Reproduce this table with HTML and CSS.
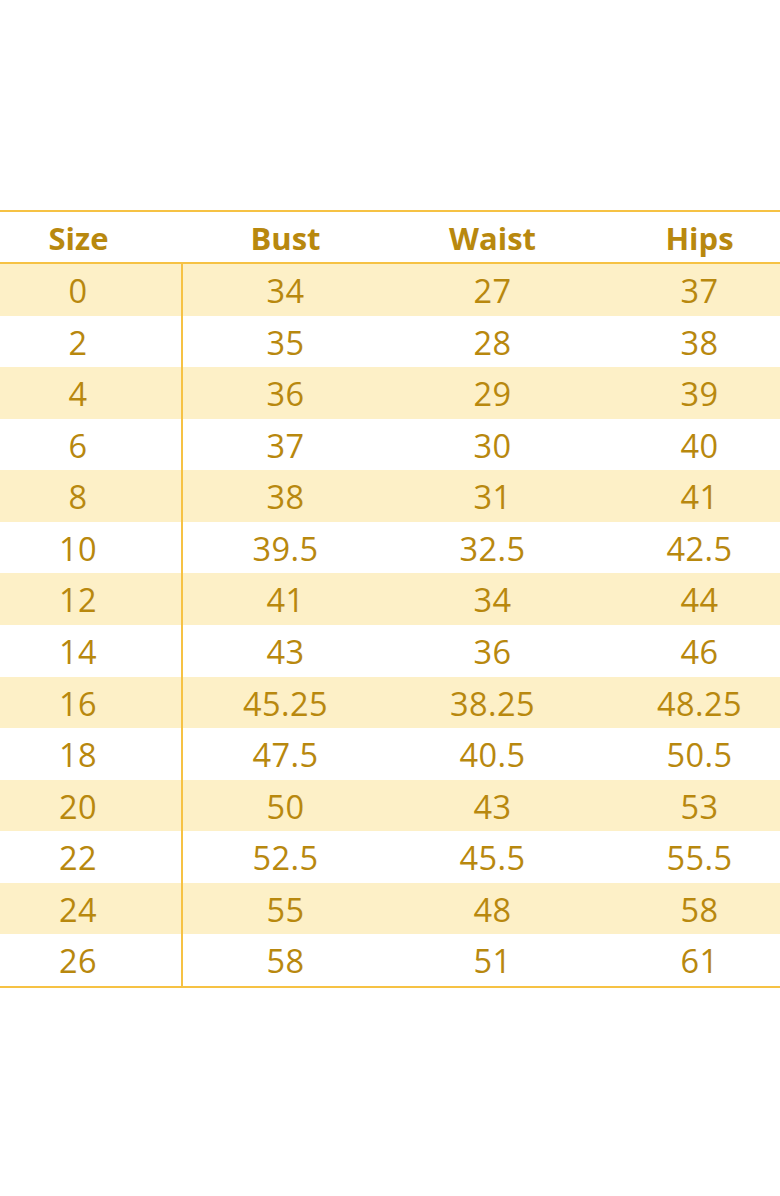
FILE: index.html
```html
<!DOCTYPE html>
<html>
<head>
<meta charset="utf-8">
<link rel="stylesheet" href="styles.css">
</head>
<body>
<div class="chart">
  <div class="row head"><div class="cell first">Size</div><div class="cell">Bust</div><div class="cell">Waist</div><div class="cell">Hips</div></div>
  <div class="row fill"><div class="cell first">0</div><div class="cell">34</div><div class="cell">27</div><div class="cell">37</div></div>
  <div class="row"><div class="cell first">2</div><div class="cell">35</div><div class="cell">28</div><div class="cell">38</div></div>
  <div class="row fill"><div class="cell first">4</div><div class="cell">36</div><div class="cell">29</div><div class="cell">39</div></div>
  <div class="row"><div class="cell first">6</div><div class="cell">37</div><div class="cell">30</div><div class="cell">40</div></div>
  <div class="row fill"><div class="cell first">8</div><div class="cell">38</div><div class="cell">31</div><div class="cell">41</div></div>
  <div class="row"><div class="cell first">10</div><div class="cell">39.5</div><div class="cell">32.5</div><div class="cell">42.5</div></div>
  <div class="row fill"><div class="cell first">12</div><div class="cell">41</div><div class="cell">34</div><div class="cell">44</div></div>
  <div class="row"><div class="cell first">14</div><div class="cell">43</div><div class="cell">36</div><div class="cell">46</div></div>
  <div class="row fill"><div class="cell first">16</div><div class="cell">45.25</div><div class="cell">38.25</div><div class="cell">48.25</div></div>
  <div class="row"><div class="cell first">18</div><div class="cell">47.5</div><div class="cell">40.5</div><div class="cell">50.5</div></div>
  <div class="row fill"><div class="cell first">20</div><div class="cell">50</div><div class="cell">43</div><div class="cell">53</div></div>
  <div class="row"><div class="cell first">22</div><div class="cell">52.5</div><div class="cell">45.5</div><div class="cell">55.5</div></div>
  <div class="row fill"><div class="cell first">24</div><div class="cell">55</div><div class="cell">48</div><div class="cell">58</div></div>
  <div class="row"><div class="cell first">26</div><div class="cell">58</div><div class="cell">51</div><div class="cell">61</div></div>
</div>
</body>
</html>
```
FILE: styles.css
```css
html, body {
  margin: 0;
  padding: 0;
  background: #ffffff;
  overflow: hidden;
}
body {
  width: 780px;
  height: 1196px;
  font-family: "Open Sans", Lato, sans-serif;
  color: #b8880e;
}
.chart {
  margin-top: 210px;
  margin-left: -25px;
  width: 828px;
  border-top: 2px solid #f6c244;
  border-bottom: 2px solid #f6c244;
}
.row {
  display: grid;
  grid-template-columns: repeat(4, 207px);
  height: 51.57px;
  font-size: 32.5px;
  font-weight: 500;
  line-height: 1;
  letter-spacing: 0.4px;
}
.head {
  height: 50px;
  border-bottom: 2px solid #f6c244;
  font-size: 31px;
  font-weight: 700;
  letter-spacing: 0;
}
.fill {
  background: #fdf0c7;
}
.cell {
  display: flex;
  align-items: center;
  justify-content: center;
  padding-top: 3px;
}
.row:not(.head) .first {
  border-right: 2px solid #f6c244;
  margin-right: -1px;
}
```
